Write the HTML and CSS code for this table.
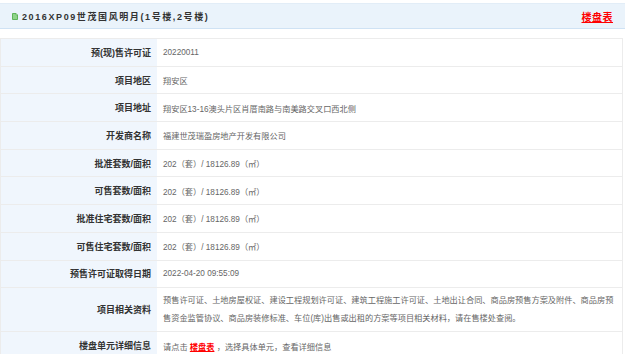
FILE: index.html
```html
<!DOCTYPE html>
<html lang="zh-CN">
<head>
<meta charset="utf-8">
<title>2016XP09世茂国风明月</title>
<link rel="stylesheet" href="styles.css">
</head>
<body>
<div class="head">
  <div class="title">
    <svg class="doc" width="6" height="7" viewBox="0 0 6 7"><path d="M0.5 0.5H4L5.5 2V6.5H0.5Z" fill="#8fd48a" stroke="#5fb45a" stroke-width="1"/><path d="M4 0.5V2H5.5" fill="#dff3dc" stroke="#5fb45a" stroke-width="0.8"/></svg>
    <span>2016XP09世茂国风明月(1号楼,2号楼)</span>
  </div>
  <a class="link head-link" href="#">楼盘表</a>
</div>
<div class="info">
  <div class="lab">预(现)售许可证</div><div class="val">20220011</div>
  <div class="lab">项目地区</div><div class="val">翔安区</div>
  <div class="lab">项目地址</div><div class="val">翔安区13-16澳头片区肖厝南路与南美路交叉口西北侧</div>
  <div class="lab">开发商名称</div><div class="val">福建世茂瑞盈房地产开发有限公司</div>
  <div class="lab">批准套数/面积</div><div class="val">202（套）/ 18126.89（㎡）</div>
  <div class="lab">可售套数/面积</div><div class="val">202（套）/ 18126.89（㎡）</div>
  <div class="lab">批准住宅套数/面积</div><div class="val">202（套）/ 18126.89（㎡）</div>
  <div class="lab">可售住宅套数/面积</div><div class="val">202（套）/ 18126.89（㎡）</div>
  <div class="lab">预售许可证取得日期</div><div class="val">2022-04-20 09:55:09</div>
  <div class="lab tall">项目相关资料</div><div class="val tall multi">预售许可证、土地房屋权证、建设工程规划许可证、建筑工程施工许可证、土地出让合同、商品房预售方案及附件、商品房预售资金监管协议、商品房装修标准、车位(库)出售或出租的方案等项目相关材料，请在售楼处查阅。</div>
  <div class="lab">楼盘单元详细信息</div><div class="val">请点击&nbsp;<a class="link" href="#">楼盘表</a>&nbsp;，选择具体单元，查看详细信息</div>
</div>
</body>
</html>
```
FILE: styles.css
```css
html, body {
  margin: 0;
  padding: 0;
  background: #fff;
}
body {
  font-family: "Liberation Sans", "Noto Sans CJK SC", sans-serif;
  color: #333;
}
.head {
  margin-top: 3px;
  height: 26px;
  box-sizing: border-box;
  background: #eaf3fb;
  border-top: 1px solid #e2edf7;
  border-bottom: 1px solid #cfe2f4;
  display: flex;
  align-items: center;
  justify-content: space-between;
  padding: 0 12px 0 12px;
}
.title {
  display: flex;
  align-items: center;
  gap: 4px;
  font-size: 9px;
  font-weight: bold;
  letter-spacing: 1.6px;
  color: #333;
}
.doc {
  display: block;
}
.link {
  color: #f00;
  font-weight: bold;
  text-decoration: underline;
}
.head-link {
  font-size: 10px;
  letter-spacing: 0.5px;
}
.info {
  margin-top: 9px;
  width: 623px;
  display: grid;
  grid-template-columns: 156px 1fr;
  border: 1px solid #ececec;
  border-bottom: none;
  box-sizing: border-box;
}
.lab, .val {
  height: 27.7px;
  box-sizing: border-box;
  border-bottom: 1px solid #ececec;
  display: flex;
  align-items: center;
}
.lab {
  background: #f0f6fd;
  justify-content: flex-end;
  padding-right: 6px;
  font-size: 9px;
  font-weight: bold;
  color: #333;
}
.val {
  padding-left: 6px;
  font-size: 8.2px;
  color: #666;
}
.tall {
  height: 44px;
}
.multi {
  line-height: 17.5px;
  padding-right: 4px;
}
```
